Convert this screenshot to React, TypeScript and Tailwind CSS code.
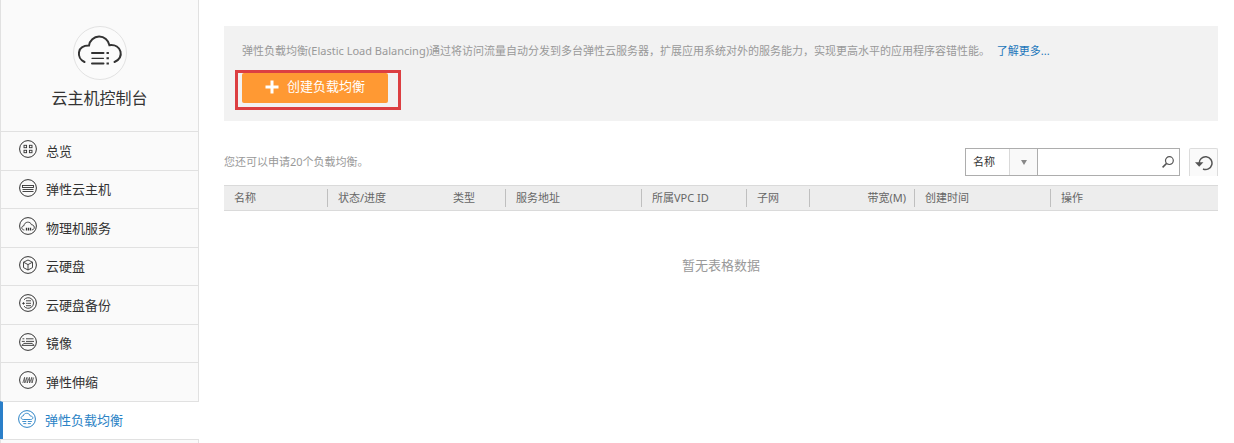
import type { ReactNode } from 'react';

type NavItem = { label: string; icon: ReactNode; active?: boolean };

const navItems: NavItem[] = [
  {
    label: '总览',
    icon: (
      <>
        <rect x="5" y="5.3" width="2.6" height="2.4" />
        <rect x="10.4" y="5.3" width="2.6" height="2.4" />
        <rect x="5" y="10.3" width="2.6" height="2.4" />
        <rect x="10.4" y="10.3" width="2.6" height="2.4" />
      </>
    ),
  },
  {
    label: '弹性云主机',
    icon: (
      <>
        <rect x="3.5" y="6.5" width="11" height="2" />
        <path d="M3.5 10.5h11M3.5 12.5h11" />
      </>
    ),
  },
  {
    label: '物理机服务',
    icon: (
      <>
        <path d="M5.4 13C2 12.8 2 9 5 8.7C5.2 4.4 11.6 4 12.4 7.7C16.2 7.8 16.2 12.8 12.8 13" />
        <path d="M7.5 10.8v2.6M9.5 10.8v2.6M11.5 10.8v2.6" strokeWidth="1.3" />
      </>
    ),
  },
  {
    label: '云硬盘',
    icon: <path d="M9 4L13.5 6.2V11.6L9 14L4.5 11.6V6.2ZM4.5 6.2L9 8.6L13.5 6.2M9 8.6V14" />,
  },
  {
    label: '云硬盘备份',
    icon: (
      <>
        <path d="M5 5.8A5.3 5.3 0 1 1 5 12.2" />
        <path d="M7 6.8h5M7 9.3h5M7 11.7h5" />
        <path d="M3.2 9.4h2.6M4.5 8.2v2.4" />
      </>
    ),
  },
  {
    label: '镜像',
    icon: (
      <>
        <path d="M3.5 5.8h1.8M7 5.8h7.5M2.8 8.4h3M7 8.4h8M3.2 12.2l1.6-1.8h8.4l1.6 1.8" />
        <path d="M2.6 12.4h12.8" />
      </>
    ),
  },
  {
    label: '弹性伸缩',
    icon: <path d="M3.8 12L5.6 6.3L5.8 12L8 6.3L8.2 12L10.4 6.3L10.6 12L12.8 6.3L13 12L14.6 6.5" strokeWidth="0.7" />,
  },
  {
    label: '弹性负载均衡',
    active: true,
    icon: (
      <>
        <path d="M5.4 9.5C2.2 9.3 2.6 6.2 5.2 6C5.8 2.4 11.5 2.4 12.2 6C15.6 6 15.7 9.4 12.7 9.5Z" />
        <path d="M4.3 11.5h4M9.8 11.5h4M5.3 13.6h3M9.8 13.6h3" />
      </>
    ),
  },
];

type Column = { label: string; width?: string; divider: boolean; right?: boolean };

const columns: Column[] = [
  { label: '名称', width: 'w-[104px]', divider: true },
  { label: '状态/进度', width: 'w-[115px]', divider: false },
  { label: '类型', width: 'w-[63px]', divider: true },
  { label: '服务地址', width: 'w-[136px]', divider: true },
  { label: '所属VPC ID', width: 'w-[105px]', divider: true },
  { label: '子网', width: 'w-[63px]', divider: true },
  { label: '带宽(M)', width: 'w-[105px]', divider: true, right: true },
  { label: '创建时间', width: 'w-[136px]', divider: true },
  { label: '操作', divider: false },
];

function CloudLogo() {
  return (
    <svg viewBox="0 0 54 54" className="size-[54px]" fill="none" aria-hidden="true">
      <circle cx="27" cy="27" r="26.5" stroke="#e2e2e2" fill="#fbfbfb" />
      <g stroke="#333" strokeWidth="2" strokeLinecap="round">
        <path d="M11.5 36C3.2 32 3.6 19.6 16 19.6A10.3 10.3 0 0 1 36.4 19.2C48.6 17.8 52 32 41.5 36" />
        <path d="M19 27h11.5M19 37.5h11.5" />
        <path d="M19 32.3h11.5" strokeWidth="1.2" />
      </g>
      <path d="M33.5 26h2.4v2h-2.4zM33.5 31.3h2.4v2h-2.4zM33.5 36.5h2.4v2h-2.4z" fill="#333" />
    </svg>
  );
}

function Sidebar() {
  return (
    <aside className="flex w-[199px] shrink-0 flex-col">
      <div className="flex h-[131px] flex-col items-center border-x border-[#e1e1e1] bg-[#fafafa] pt-[26px]">
        <CloudLogo />
        <h1 className="mt-[6px] text-[16px] leading-6 text-[#333]">云主机控制台</h1>
      </div>
      <nav className="grid h-[308px] auto-rows-fr">
        {navItems.map((item) => (
          <a
            key={item.label}
            href="#"
            aria-current={item.active ? 'page' : undefined}
            className={
              item.active
                ? 'flex items-center gap-[9px] border-t border-l-[3px] border-t-[#e1e1e1] border-l-[#2a7fc9] bg-white pl-[15px] text-[13px] leading-5 text-[#2b83c6]'
                : 'flex items-center gap-[9px] border-x border-t border-[#e1e1e1] bg-[#fafafa] pl-[18px] text-[13px] leading-5 text-[#333]'
            }
          >
            <svg
              viewBox="0 0 18 18"
              className="mb-[3px] size-[18px]"
              fill="none"
              stroke="currentColor"
              strokeWidth="0.9"
              aria-hidden="true"
            >
              <circle cx="9" cy="9" r="8.4" strokeWidth="1" />
              {item.icon}
            </svg>
            <span>{item.label}</span>
          </a>
        ))}
      </nav>
      <div className="min-h-1 flex-1 border-x border-t border-[#e1e1e1] bg-[#fafafa]" />
    </aside>
  );
}

function Intro() {
  return (
    <section className="bg-[#f2f2f2] px-[18px] pt-4 pb-[18px]">
      <p className="text-[11px] leading-[18px] text-[#999]">
        弹性负载均衡(Elastic Load Balancing)通过将访问流量自动分发到多台弹性云服务器，扩展应用系统对外的服务能力，实现更高水平的应用程序容错性能。{' '}
        <a href="#" className="ml-1 text-[#2277bb]">
          了解更多...
        </a>
      </p>
      <div className="relative mt-[13px] w-fit">
        <button
          type="button"
          className="flex h-[30px] w-[146px] items-center justify-center gap-2 rounded-[2px] bg-[#ff9933] pb-[2px] text-[13px] text-white"
        >
          <svg viewBox="0 0 14 14" className="size-[14px]" stroke="currentColor" strokeWidth="3" aria-hidden="true">
            <path d="M7 0.5v13M0.5 7h13" />
          </svg>
          创建负载均衡
        </button>
        <div className="pointer-events-none absolute -top-[3px] -right-[13px] -bottom-[7px] -left-[7px] border-[3px] border-[#dc3f42]" />
      </div>
    </section>
  );
}

function Toolbar() {
  return (
    <div className="mt-[27px] flex items-center justify-between">
      <p className="text-[11px] text-[#999]">您还可以申请20个负载均衡。</p>
      <div className="flex items-stretch gap-[9px]">
        <form className="flex h-7 w-[215px] border border-[#adadad]" onSubmit={(e) => e.preventDefault()}>
          <div className="relative flex w-[72px] border-r border-[#adadad]">
            <select aria-label="搜索字段" className="w-full appearance-none bg-white pl-[7px] text-[11px] text-[#333]">
              <option>名称</option>
            </select>
            <span className="pointer-events-none absolute inset-y-0 right-0 flex w-7 items-center justify-center border-l border-[#d9d9d9] bg-[#f9f9f9]">
              <svg viewBox="0 0 6 5" className="h-[5px] w-[6px]" fill="#888" aria-hidden="true">
                <path d="M0 0h6L3 5z" />
              </svg>
            </span>
          </div>
          <input type="text" aria-label="搜索内容" className="min-w-0 flex-1 px-2 text-[11px] outline-none" />
          <button type="submit" aria-label="搜索" className="flex w-[17px] items-center">
            <svg viewBox="0 0 12 12" className="size-3" fill="none" stroke="#555" aria-hidden="true">
              <circle cx="7.4" cy="4.6" r="3.9" strokeWidth="1.2" />
              <path d="M4.6 7.4L0.6 11.4" strokeWidth="1.5" />
            </svg>
          </button>
        </form>
        <button
          type="button"
          aria-label="刷新"
          className="flex h-7 w-[29px] items-center justify-center rounded-t-[2px] border border-b-0 border-[#dcdcdc] bg-[#fafafa]"
        >
          <svg viewBox="0 0 18 16" className="h-4 w-[18px]" fill="none" aria-hidden="true">
            <path d="M4.2 8.5A6.4 6.4 0 1 1 8 14" stroke="#555" strokeWidth="1.5" />
            <path d="M0 7.2h8.4L4.2 11.8z" fill="#555" />
          </svg>
        </button>
      </div>
    </div>
  );
}

function BalancerTable() {
  return (
    <table className="mt-[9px] w-full table-fixed border-separate border-spacing-0">
      <thead>
        <tr>
          {columns.map((column) => (
            <th
              key={column.label}
              scope="col"
              className={`border-y border-[#dadada] bg-[#ededed] px-0 py-[3px] font-normal ${column.width ?? ''}`}
            >
              <div
                className={`text-[11px] leading-[18px] text-[#666] ${
                  column.right ? 'pr-2 text-right' : 'pl-[10px] text-left'
                } ${column.divider ? 'border-r border-[#bfbfbf]' : ''}`}
              >
                {column.label}
              </div>
            </th>
          ))}
        </tr>
      </thead>
      <tbody>
        <tr>
          <td colSpan={columns.length} className="pt-11 text-center text-[13px] leading-5 text-[#999]">
            暂无表格数据
          </td>
        </tr>
      </tbody>
    </table>
  );
}

export default function App() {
  return (
    <div className="flex min-h-screen bg-white font-['Noto_Sans','Noto_Sans_CJK_SC',sans-serif]">
      <Sidebar />
      <main className="min-w-0 flex-1 pt-[26px] pr-4 pl-[25px]">
        <Intro />
        <Toolbar />
        <BalancerTable />
      </main>
    </div>
  );
}
